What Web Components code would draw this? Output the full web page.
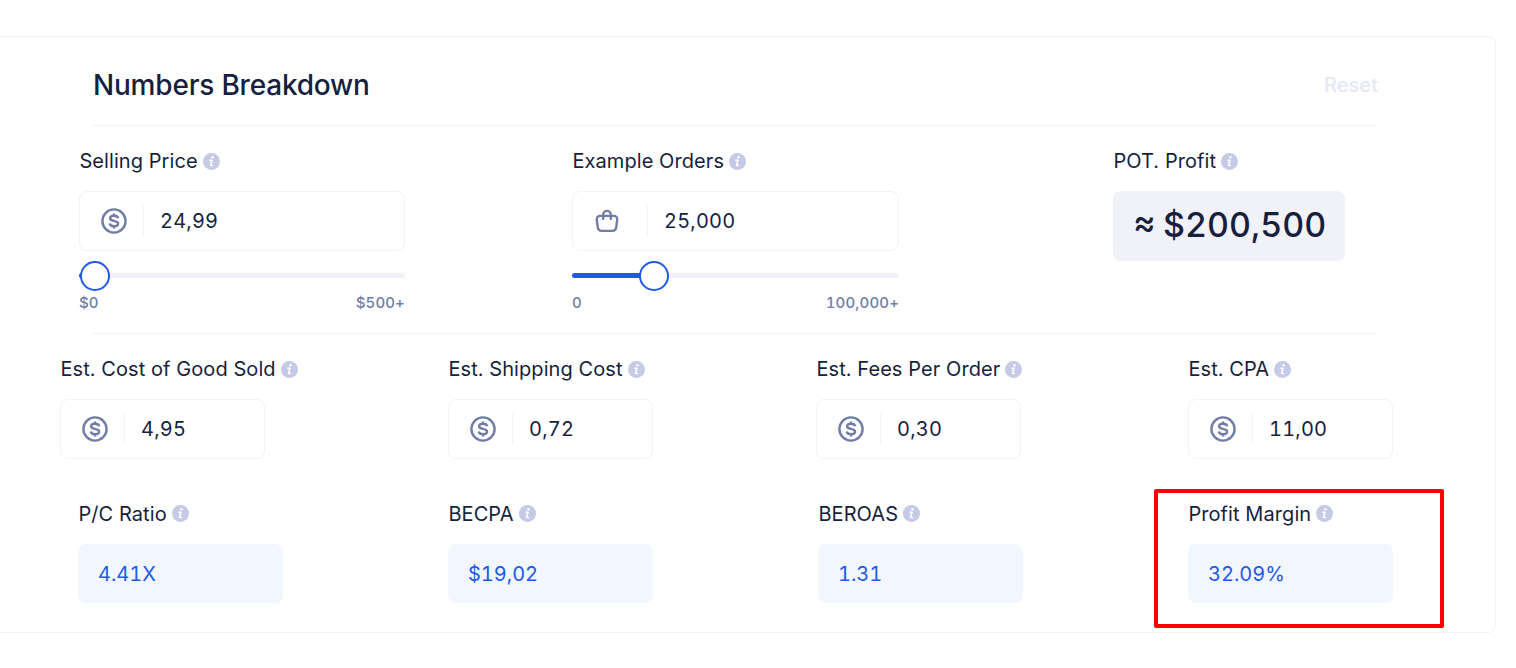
<!DOCTYPE html>
<html lang="en">
<head>
<meta charset="utf-8">
<title>Numbers Breakdown</title>
<style>
    :root {
        --ink: #161f3d;
        --muted: #717da6;
        --line: #f1f2f8;
        --blue: #2259ea;
        --info: #c5cae6;
    }
    body {
        margin: 0;
        background: #fff;
        color: var(--ink);
        font-family: Inter, "Liberation Sans", sans-serif;
        overflow: hidden;
    }
</style>
</head>
<body>
<breakdown-card heading="Numbers Breakdown" action="Reset">
    <card-row slot="main" columns="493px 541px 232px" style="margin-left: 79px">
        <field-group label="Selling Price" width="326">
            <value-input icon="dollar">24,99</value-input>
            <range-slider min="$0" max="$500+" style="--thumb: 16px"></range-slider>
        </field-group>
        <field-group label="Example Orders" width="327">
            <value-input icon="bag">25,000</value-input>
            <range-slider min="0" max="100,000+" style="--thumb: 82px"></range-slider>
        </field-group>
        <field-group label="POT. Profit" width="232">
            <profit-total>$200,500</profit-total>
        </field-group>
    </card-row>
    <card-row slot="costs" columns="388px 368px 372px 205px" style="margin-left: 60px">
        <field-group label="Est. Cost of Good Sold" width="205"><value-input icon="dollar">4,95</value-input></field-group>
        <field-group label="Est. Shipping Cost" width="205"><value-input icon="dollar">0,72</value-input></field-group>
        <field-group label="Est. Fees Per Order" width="205"><value-input icon="dollar">0,30</value-input></field-group>
        <field-group label="Est. CPA" width="205"><value-input icon="dollar">11,00</value-input></field-group>
    </card-row>
    <card-row slot="metrics" columns="370px 370px 370px 205px" style="margin-left: 78px; --info-shift: -1px">
        <field-group label="P/C Ratio" width="205"><metric-value>4.41X</metric-value></field-group>
        <field-group label="BECPA" width="205"><metric-value>$19,02</metric-value></field-group>
        <field-group label="BEROAS" width="205"><metric-value>1.31</metric-value></field-group>
        <field-group label="Profit Margin" width="205" highlight><metric-value>32.09%</metric-value></field-group>
    </card-row>
</breakdown-card>

<script>
/**
 * Base class: attaches an open shadow root and fills it from styles() and template()
 */
class BaseComponent extends HTMLElement {
    constructor() {
        super();
        this.attachShadow({ mode: 'open' });
    }

    connectedCallback() {
        this.render();
    }

    attr(name) {
        return this.getAttribute(name) || '';
    }

    styles() {
        return '';
    }

    template() {
        return '<slot></slot>';
    }

    render() {
        this.shadowRoot.innerHTML = `
            <style>${this.styles()}</style>
            ${this.template()}
        `;
    }
}

const ICONS = {
    dollar: `
        <svg width="28" height="28" viewBox="0 0 28 28" fill="none" stroke="currentColor" stroke-width="2.4">
            <circle cx="14" cy="14" r="11.6"/>
            <path d="M18.2 11.2c-.3-1.6-1.8-2.5-4.2-2.5s-3.9.9-3.9 2.5c0 1.7 1.5 2.2 3.9 2.7 2.5.5 4.1 1 4.1 2.800 0 1.600-1.700 2.500-4.100 2.500-2.400 0-4-1-4.300-2.700M14 6.400v2.400M14 19v2.400"/>
        </svg>`,
    bag: `
        <svg width="28" height="28" viewBox="0 0 28 28" fill="none" stroke="currentColor" stroke-width="2.4" stroke-linecap="round" stroke-linejoin="round">
            <path d="M7.3 8.9h13.4c2.5 0 3.8 1.5 3.5 3.8l-.9 7.5c-.3 2.4-1.6 3.7-3.9 3.7h-10.8c-2.3 0-3.6-1.3-3.9-3.7l-.9-7.5c-.3-2.3 1-3.8 3.5-3.8z"/>
            <path d="M10.2 11.8V7.7a3.8 3.8 0 0 1 7.6 0v4.1"/>
        </svg>`,
};

class InfoIcon extends BaseComponent {
    styles() {
        return `
            :host { display: block; width: 17px; height: 17px; color: var(--info); }
            svg { display: block; }
        `;
    }

    template() {
        return `
            <svg width="17" height="17" viewBox="0 0 17 17">
                <circle cx="8.5" cy="8.5" r="8.5" fill="currentColor"/>
                <circle cx="9.5" cy="4.3" r="1.25" fill="#fff"/>
                <path d="M6.9 7.3h2l-1.2 5.2h1.7" fill="none" stroke="#fff" stroke-width="1.6" stroke-linejoin="round" stroke-linecap="round"/>
            </svg>
        `;
    }
}

class BreakdownCard extends BaseComponent {
    styles() {
        return `
            :host {
                display: flex;
                flex-direction: column;
                box-sizing: border-box;
                width: 1496px;
                height: 597px;
                margin-top: 36px;
                border: 1px solid var(--line);
                border-left: 0;
                border-radius: 0 8px 8px 0;
            }
            header {
                display: flex;
                align-items: center;
                justify-content: space-between;
                box-sizing: border-box;
                height: 89px;
                margin: 0 117px 0 92px;
                padding: 7px 0 0 1px;
                border-bottom: 1px solid var(--line);
            }
            h2 { margin: 0; font-size: 28px; font-weight: 520; line-height: 34px; letter-spacing: -0.2px; }
            button {
                padding: 0;
                border: 0;
                background: none;
                color: #e4e7f4;
                font: 540 20px/24px Inter, sans-serif;
                letter-spacing: 0.05px;
            }
            .main { box-sizing: border-box; height: 207px; padding-top: 23px; }
            hr { margin: 0 117px 0 92px; border: 0; height: 1px; background: var(--line); }
            .costs { height: 122px; padding-top: 23px; }
            .metrics { padding-top: 23px; }
        `;
    }

    template() {
        return `
            <header>
                <h2>${this.attr('heading')}</h2>
                <button type="button">${this.attr('action')}</button>
            </header>
            <div class="main"><slot name="main"></slot></div>
            <hr>
            <div class="costs"><slot name="costs"></slot></div>
            <div class="metrics"><slot name="metrics"></slot></div>
        `;
    }
}

class CardRow extends BaseComponent {
    styles() {
        return `
            :host {
                display: grid;
                grid-template-columns: ${this.attr('columns')};
                align-items: start;
            }
        `;
    }
}

class FieldGroup extends BaseComponent {
    styles() {
        return `
            :host { display: block; position: relative; width: ${this.attr('width')}px; }
            .label {
                display: flex;
                align-items: center;
                gap: 5px;
                height: 24px;
                margin-bottom: 18px;
                padding-left: 0.4px;
                font-size: 20px;
                line-height: 24px;
                letter-spacing: 0.08px;
                white-space: nowrap;
            }
            info-icon { margin-top: var(--info-shift, 1px); }
            /* red frame drawn around the highlighted group */
            .frame {
                position: absolute;
                left: -34px;
                top: -13px;
                width: 282px;
                height: 131px;
                border: 4px solid #ff0000;
                border-radius: 2px;
            }
        `;
    }

    template() {
        return `
            <div class="label"><span>${this.attr('label')}</span><info-icon></info-icon></div>
            <slot></slot>
            ${this.hasAttribute('highlight') ? '<div class="frame"></div>' : ''}
        `;
    }
}

class ValueInput extends BaseComponent {
    styles() {
        const gap = this.attr('icon') === 'bag' ? 26 : 15;
        return `
            :host {
                display: flex;
                align-items: center;
                box-sizing: border-box;
                height: 60px;
                padding-left: 20px;
                border: 1px solid var(--line);
                border-radius: 8px;
                font-size: 20px;
                font-variant-numeric: tabular-nums;
                letter-spacing: 0.2px;
            }
            .icon { display: flex; color: var(--muted); }
            .value {
                display: flex;
                align-items: center;
                height: 31px;
                margin-left: ${gap}px;
                padding-left: 16px;
                border-left: 1px solid var(--line);
            }
        `;
    }

    template() {
        return `
            <span class="icon">${ICONS[this.attr('icon')]}</span>
            <span class="value"><slot></slot></span>
        `;
    }
}

class RangeSlider extends BaseComponent {
    styles() {
        return `
            :host { display: block; margin-top: 10px; }
            .rail { display: flex; align-items: flex-start; height: 30px; position: relative; }
            .track {
                width: 100%;
                height: 5px;
                margin-top: 12px;
                border-radius: 3px;
                background: linear-gradient(to right, var(--blue) var(--thumb), #f1f2f8 var(--thumb));
            }
            .thumb {
                position: absolute;
                left: calc(var(--thumb) - 15px);
                box-sizing: border-box;
                width: 30px;
                height: 30px;
                border: 2px solid var(--blue);
                border-radius: 50%;
                background: #fff;
            }
            .ends {
                display: flex;
                justify-content: space-between;
                margin-top: 2px;
                color: var(--muted);
                font-size: 15px;
                font-weight: 450;
                line-height: 20px;
                font-variant-numeric: tabular-nums;
                letter-spacing: 0.15px;
            }
        `;
    }

    template() {
        return `
            <div class="rail"><div class="track"></div><div class="thumb"></div></div>
            <div class="ends"><span>${this.attr('min')}</span><span>${this.attr('max')}</span></div>
        `;
    }
}

class ProfitTotal extends BaseComponent {
    styles() {
        return `
            :host {
                display: flex;
                align-items: center;
                box-sizing: border-box;
                height: 70px;
                padding: 0 0 3px 20px;
                border-radius: 8px;
                background: #f1f2f8;
                font-weight: 520;
                font-size: 34px;
                font-variant-numeric: tabular-nums;
                letter-spacing: 0;
            }
            .approx { width: 30px; margin-top: -6px; font-size: 34px; font-variant-numeric: normal; }
        `;
    }

    template() {
        return '<span class="approx">\u2248</span><span><slot></slot></span>';
    }
}

class MetricValue extends BaseComponent {
    styles() {
        return `
            :host {
                display: flex;
                align-items: center;
                height: 59px;
                padding-left: 20px;
                border-radius: 8px;
                background: #f1f6ff;
                color: var(--blue);
                font-size: 20px;
                font-variant-numeric: tabular-nums;
            }
        `;
    }
}

customElements.define('info-icon', InfoIcon);
customElements.define('value-input', ValueInput);
customElements.define('range-slider', RangeSlider);
customElements.define('profit-total', ProfitTotal);
customElements.define('metric-value', MetricValue);
customElements.define('field-group', FieldGroup);
customElements.define('card-row', CardRow);
customElements.define('breakdown-card', BreakdownCard);
</script>
</body>
</html>
